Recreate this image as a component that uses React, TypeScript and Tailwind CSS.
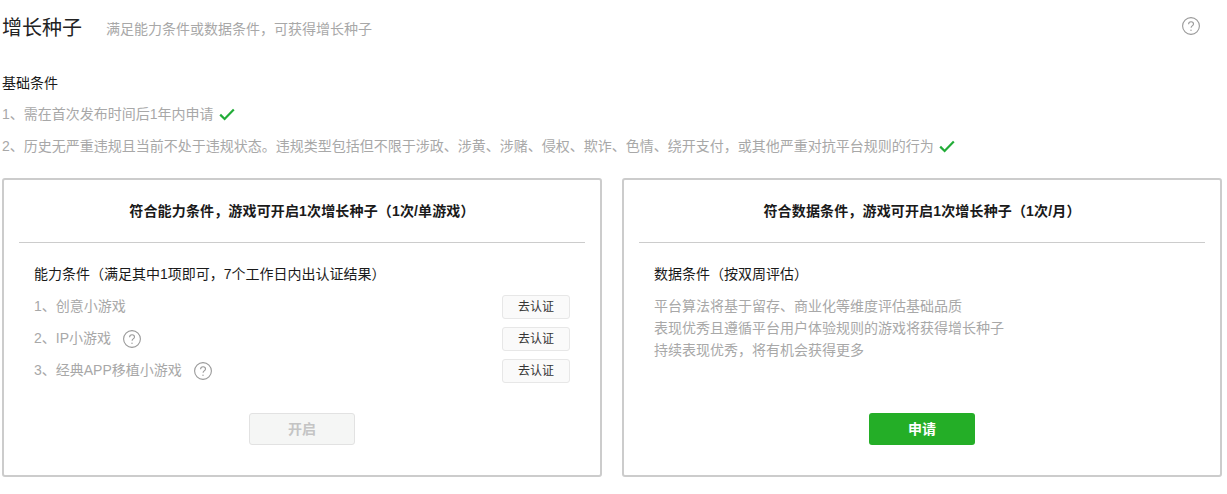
import { ReactNode } from "react";

const Help = ({ size = 18 }: { size?: number }) => (
  <svg width={size} height={size} viewBox="0 0 18 18" fill="none" className="shrink-0">
    <circle cx="9" cy="9" r="8.4" stroke="#999999" strokeWidth="1.1" />
    <path
      d="M6.6 7.2c0-1.5 1.1-2.4 2.5-2.4s2.4.9 2.4 2.1c0 1-.6 1.5-1.3 2-.7.5-1.1.9-1.1 1.8"
      stroke="#999999"
      strokeWidth="1.1"
    />
    <circle cx="9" cy="13.2" r="0.7" fill="#999999" />
  </svg>
);

const Check = () => (
  <svg width="16" height="13" viewBox="0 0 16 13" fill="none" className="shrink-0">
    <path d="M1.2 6.6l4.4 4.4L14.8 1.4" stroke="#22ac38" strokeWidth="2.2" />
  </svg>
);

const Card = ({ title, children }: { title: string; children: ReactNode }) => (
  <div className="h-[299px] w-[600px] rounded-[3px] border-2 border-[#cccccc] px-[15px]">
    <div className="flex h-[63px] items-center justify-center border-b border-[#cccccc] text-sm font-bold tracking-[0.15px] text-[#1a1a1a]">
      {title}
    </div>
    {children}
  </div>
);

const capabilities = [
  { label: "1、创意小游戏", help: false },
  { label: "2、IP小游戏", help: true },
  { label: "3、经典APP移植小游戏", help: true },
];

export default function App() {
  return (
    <div className="h-[494px] w-[1227px] overflow-hidden bg-white pl-[2px] font-['Liberation_Sans','Noto_Sans_CJK_SC',sans-serif] text-sm">
      <div className="flex h-[56px] items-center pr-[27px]">
        <h1 className="text-[20px] font-normal text-[#222222]">增长种子</h1>
        <p className="ml-6 mt-[2px] text-[#a8a8a8]">满足能力条件或数据条件，可获得增长种子</p>
        <div className="mb-1 ml-auto">
          <Help />
        </div>
      </div>

      <div className="mt-[17px] leading-5 text-[#1a1a1a]">基础条件</div>
      <div className="mt-[11px] flex h-5 items-center gap-[5px] text-[#a8a8a8]">
        1、需在首次发布时间后1年内申请 <Check />
      </div>
      <div className="mt-3 flex h-5 items-center gap-[5px] text-[#a8a8a8]">
        2、历史无严重违规且当前不处于违规状态。违规类型包括但不限于涉政、涉黄、涉赌、侵权、欺诈、色情、绕开支付，或其他严重对抗平台规则的行为 <Check />
      </div>

      <div className="mt-[22px] flex gap-5">
        <Card title="符合能力条件，游戏可开启1次增长种子（1次/单游戏）">
          <div className="px-[15px]">
            <div className="mt-[21px] leading-5 text-[#1a1a1a]">能力条件（满足其中1项即可，7个工作日内出认证结果）</div>
            <div className="mt-[11px] flex flex-col gap-2">
              {capabilities.map((c) => (
                <div key={c.label} className="flex h-6 items-center text-[#a8a8a8]">
                  <span className="mb-[2px]">{c.label}</span>
                  {c.help && (
                    <span className="ml-3">
                      <Help />
                    </span>
                  )}
                  <button className="ml-auto h-6 w-[68px] rounded-[3px] border border-[#e7e7e7] bg-[#fafafa] text-xs text-[#353535]">
                    去认证
                  </button>
                </div>
              ))}
            </div>
            <div className="mt-[30px] flex justify-center">
              <button className="h-8 w-[106px] rounded-[3px] border border-[#e2e2e2] bg-[#f5f6f5] font-bold text-[#c4c4c4]">
                开启
              </button>
            </div>
          </div>
        </Card>

        <Card title="符合数据条件，游戏可开启1次增长种子（1次/月）">
          <div className="px-[15px]">
            <div className="mt-[21px] leading-5 text-[#1a1a1a]">数据条件（按双周评估）</div>
            <div className="mt-[11px] leading-[22px] text-[#a8a8a8]">
              <p>平台算法将基于留存、商业化等维度评估基础品质</p>
              <p>表现优秀且遵循平台用户体验规则的游戏将获得增长种子</p>
              <p>持续表现优秀，将有机会获得更多</p>
            </div>
            <div className="mt-[52px] flex justify-center">
              <button className="h-8 w-[106px] rounded-[3px] bg-[#24ae27] font-bold text-white">申请</button>
            </div>
          </div>
        </Card>
      </div>
    </div>
  );
}
